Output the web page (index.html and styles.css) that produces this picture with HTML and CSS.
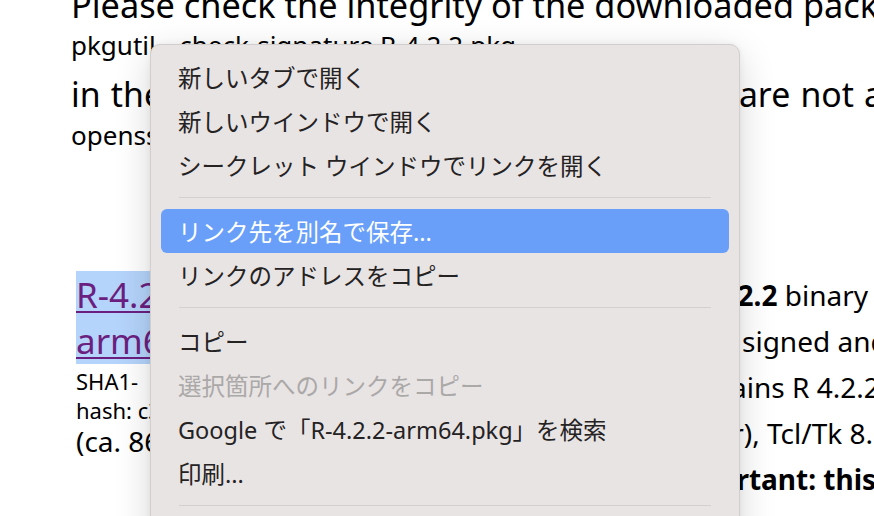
FILE: index.html
```html
<!DOCTYPE html>
<html lang="ja">
<head>
<meta charset="utf-8">
<title>R for macOS</title>
<link rel="stylesheet" href="styles.css">
</head>
<body>
<div class="page">
  <div class="intro">
    <p class="big l1">Please check the integrity of the downloaded package by checking the signature:</p>
    <p class="small l2">pkgutil --check-signature R-4.2.2.pkg</p>
    <p class="big l3">in the Terminal application. If Apple tools are not avaiable you can check the SHA1 checksum of the downloaded image:</p>
    <p class="small l4">openssl sha1 R-4.2.2.pkg</p>
  </div>
  <div class="dl">
    <div class="dl-left">
      <a class="pkg" href="#">R-4.2.2-arm64.pkg</a>
      <div class="hash">SHA1-<br>hash: c3a4ee4e3a3b1d8e64b7f9d1c2a0e5f7b8c9d0e1</div>
      <div class="size">(ca. 86MB)</div>
    </div>
    <div class="dl-right">
      <div class="rl r1"><b>R 4.2.2</b> binary for macOS 11 (Big Sur) and higher,</div>
      <div class="rl r2">signed and notarized package.</div>
      <div class="rl r3">Contains R 4.2.2 framework, R.app GUI 1.79 in 64-bit</div>
      <div class="rl r4">(M1 or newer), Tcl/Tk 8.6.12 X11 libraries and Texinfo 6.7.</div>
      <div class="rl r5"><b>Important: this release uses Xcode 13.1</b></div>
    </div>
  </div>
</div>

<div class="menu">
  <div class="item">新しいタブで開く</div>
  <div class="item">新しいウインドウで開く</div>
  <div class="item">シークレット ウインドウでリンクを開く</div>
  <div class="sep"></div>
  <div class="item active">リンク先を別名で保存...</div>
  <div class="item">リンクのアドレスをコピー</div>
  <div class="sep"></div>
  <div class="item">コピー</div>
  <div class="item disabled">選択箇所へのリンクをコピー</div>
  <div class="item">Google で「R-4.2.2-arm64.pkg」を検索</div>
  <div class="item">印刷...</div>
  <div class="sep"></div>
  <div class="item">検証</div>
</div>
</body>
</html>
```
FILE: styles.css
```css
html, body {
  margin: 0;
  height: 100%;
  overflow: hidden;
  background: #ffffff;
}

body {
  position: relative;
  font-family: "Noto Sans", "Noto Sans CJK JP", sans-serif;
  color: #000000;
}

.page {
  margin-top: -15px;
}

.intro {
  padding-left: 71px;
}

.intro p {
  margin: 0;
  white-space: nowrap;
}

.big {
  font-size: 33.8px;
  line-height: 40px;
}

.intro .l1 {
  font-size: 34.3px;
}

.small {
  font-size: 26px;
  line-height: 40px;
}

.intro .l3 {
  margin-top: 5px;
  line-height: 48px;
  word-spacing: 1.4px;
}

.l4 {
  line-height: 34px;
}

.dl {
  display: grid;
  grid-template-columns: 624px 1fr;
  padding-left: 76px;
  margin-top: 120px;
}

.dl-left {
  min-width: 0;
  width: 200px;
  font-size: 35px;
  line-height: 46px;
}

.pkg {
  font-size: 35px;
  line-height: 46px;
  color: #6b1f80;
  text-decoration: underline;
  text-decoration-thickness: 2px;
  text-underline-offset: 3px;
  background: #b5d4fb;
}

.hash {
  font-size: 22px;
  line-height: 29px;
  margin-top: 3px;
  white-space: nowrap;
}

.size {
  font-size: 28px;
  line-height: 32px;
  white-space: nowrap;
}

.dl-right {
  font-size: 28px;
  line-height: 46px;
  white-space: nowrap;
}

.rl b {
  font-weight: 700;
}

/* offsets of the long lines that run under the menu */
.r1 { margin-left: -12px; }
.r2 { margin-left: 42px; }
.r3 { margin-left: -31px; }
.r4 { margin-left: -131px; }
.r5 { margin-left: -37px; }

/* context menu */
.menu {
  position: absolute;
  left: 150px;
  top: 44px;
  width: 590px;
  height: 520px;
  box-sizing: border-box;
  padding-top: 10px;
  background: #e8e4e4;
  border: 1px solid #d2cece;
  border-radius: 10px;
  box-shadow: 0 10px 36px rgba(0, 0, 0, 0.16), 0 0 6px rgba(0, 0, 0, 0.06);
}

.item {
  height: 44px;
  display: flex;
  align-items: center;
  margin: 0 10px;
  padding-left: 17px;
  border-radius: 6px;
  font-size: 23.5px;
  color: #242222;
  white-space: nowrap;
}

.item.active {
  background: #699ff8;
  color: #ffffff;
}

.item.disabled {
  color: #aba8a8;
}

.sep {
  height: 1px;
  background: #d4d0d0;
  margin: 10px 28px 11px;
}
```
